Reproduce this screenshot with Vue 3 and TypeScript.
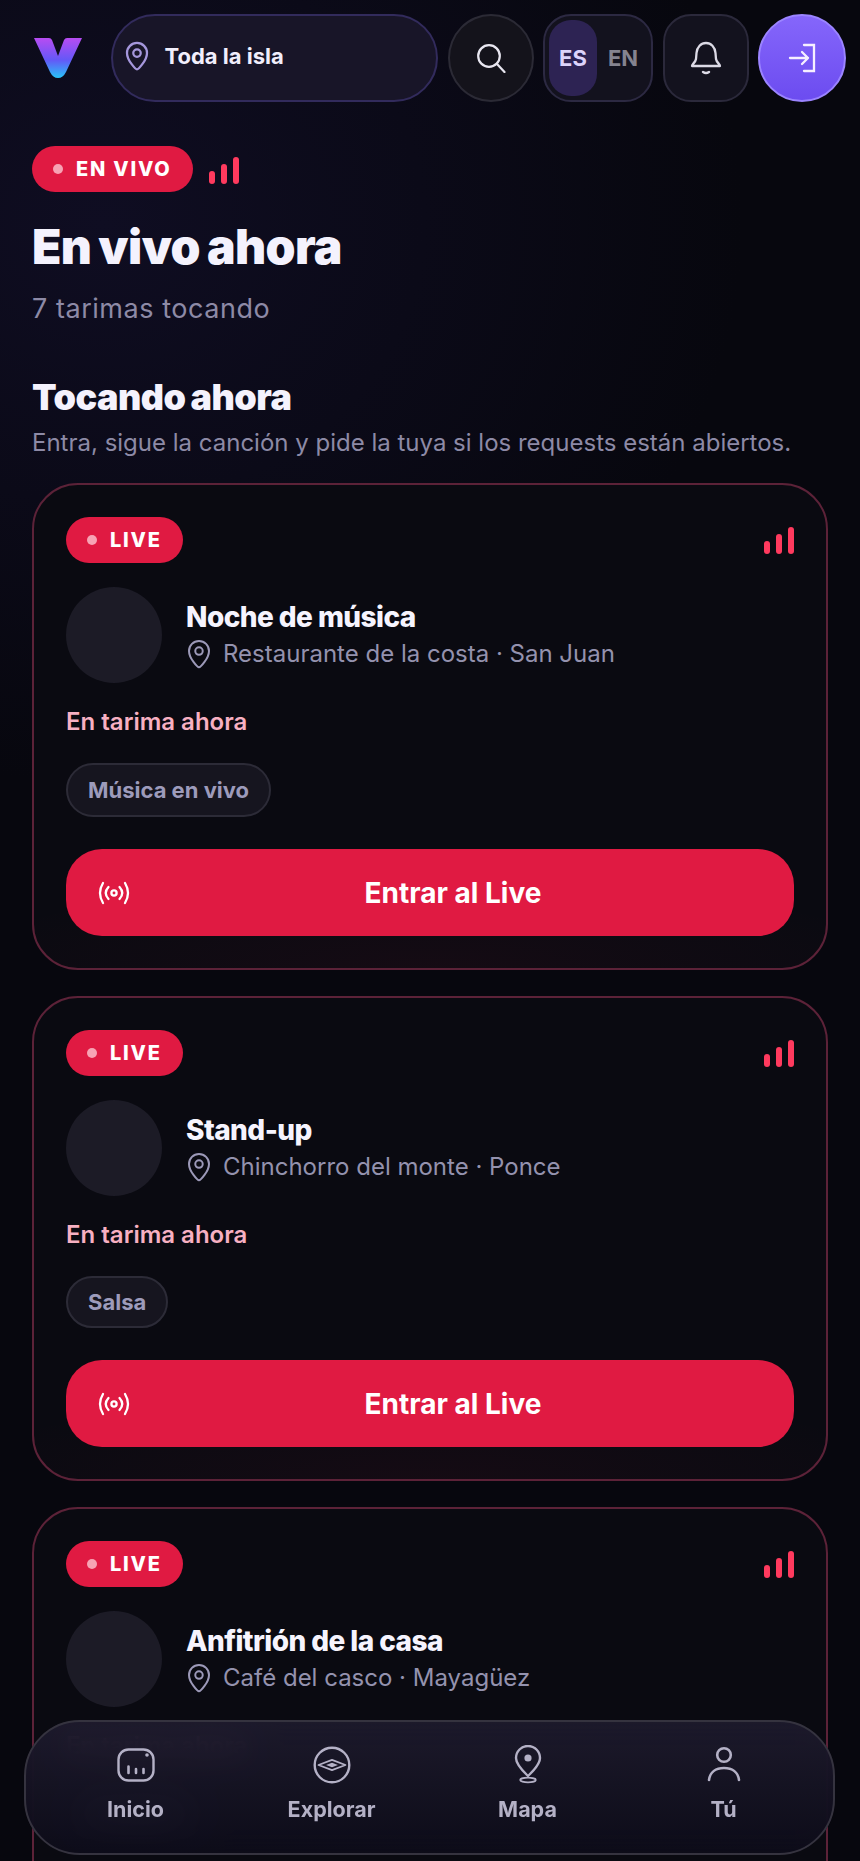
<script setup lang="ts">
interface Stage {
  id: number
  title: string
  place: string
  tag: string
  tallChip?: boolean
}

const stages: Stage[] = [
  { id: 1, title: 'Noche de música', place: 'Restaurante de la costa · San Juan', tag: 'Música en vivo', tallChip: true },
  { id: 2, title: 'Stand-up', place: 'Chinchorro del monte · Ponce', tag: 'Salsa' },
  { id: 3, title: 'Anfitrión de la casa', place: 'Café del casco · Mayagüez', tag: 'Acústico' },
]
</script>

<template>
  <div class="page">
    <header class="top">
      <svg class="logo" viewBox="0 0 50 42" width="50" height="42">
        <defs>
          <linearGradient id="logoGrad" x1="0" y1="0" x2="0" y2="1">
            <stop offset="0" stop-color="#b84cf2" />
            <stop offset="0.55" stop-color="#6458f7" />
            <stop offset="1" stop-color="#27c4f8" />
          </linearGradient>
        </defs>
        <path d="M1 1 H16 Q18 1 19 3 L25 19 L31 3 Q32 1 34 1 H49 L33 35 Q30 41 25 41 Q20 41 17 35 Z" fill="url(#logoGrad)" />
      </svg>
      <div class="loc">
        <svg viewBox="0 0 24 24" width="32" height="32" fill="none" stroke="#a597dc" stroke-width="1.700" stroke-linejoin="round">
          <path d="M12 22c-1 0-7.500-6.700-7.500-12.300a7.500 7.500 0 0 1 15 0C19.500 15.300 13 22 12 22z" />
          <circle cx="12" cy="9.800" r="2.800" />
        </svg>
        <span>Toda la isla</span>
      </div>
      <button class="round">
        <svg viewBox="0 0 30 30" width="30" height="30" fill="none" stroke="#e8e6f0" stroke-width="2.200" stroke-linecap="round">
          <circle cx="13" cy="13" r="10.800" />
          <path d="M21 21 L28.500 29" />
        </svg>
      </button>
      <div class="lang">
        <span class="lang-on">ES</span>
        <span class="lang-off">EN</span>
      </div>
      <button class="bell">
        <svg viewBox="0 0 32 34" width="32" height="34" fill="none" stroke="#dcdae6" stroke-width="2.300" stroke-linecap="round" stroke-linejoin="round">
          <path d="M2 25 H30 C30 23 26.500 21.500 26 18 L25.500 12 C25 6 21 2 16 2 C11 2 7 6 6.500 12 L6 18 C5.500 21.500 2 23 2 25 Z" />
          <path d="M13 31 Q16 33 19 31" />
        </svg>
      </button>
      <button class="login">
        <svg viewBox="0 0 30 30" width="30" height="30" fill="none" stroke="#f6efff" stroke-width="2.300" stroke-linecap="round">
          <path d="M17 2 H27 V28 H17" />
          <path d="M3 15 H21 M15 9 L21 15 L15 21" stroke-linejoin="round" />
        </svg>
      </button>
    </header>

    <main class="content">
      <div class="hero-badges">
        <span class="badge"><i class="dot"></i>EN VIVO</span>
        <span class="bars"><i></i><i></i><i></i></span>
      </div>
      <h1>En vivo ahora</h1>
      <p class="count">7 tarimas tocando</p>

      <h2>Tocando ahora</h2>
      <p class="hint">Entra, sigue la canción y pide la tuya si los requests están abiertos.</p>

      <div class="cards">
        <article v-for="s in stages" :key="s.id" class="card">
          <div class="card-top">
            <span class="badge"><i class="dot"></i>LIVE</span>
            <span class="bars"><i></i><i></i><i></i></span>
          </div>
          <div class="who">
            <div class="avatar"></div>
            <div class="who-text">
              <div class="name">{{ s.title }}</div>
              <div class="place">
                <svg viewBox="0 0 24 24" width="32" height="32" fill="none" stroke="#9c99b8" stroke-width="1.500" stroke-linejoin="round">
                  <path d="M12 22c-1 0-7.500-6.700-7.500-12.300a7.500 7.500 0 0 1 15 0C19.500 15.300 13 22 12 22z" />
                  <circle cx="12" cy="9.800" r="2.800" />
                </svg>
                <span>{{ s.place }}</span>
              </div>
            </div>
          </div>
          <div class="onstage">En tarima ahora</div>
          <div class="chips">
            <span class="chip" :class="{ 'chip-tall': s.tallChip }">{{ s.tag }}</span>
          </div>
          <button class="enter">
            <svg viewBox="0 0 30 22" width="30" height="22" fill="none" stroke="#fff" stroke-width="2.300" stroke-linecap="round">
              <circle cx="15" cy="11" r="2.600" />
              <path d="M9.500 5 Q4 11 9.500 17 M20.500 5 Q26 11 20.500 17 M4 1 Q-2 11 4 21 M26 1 Q32 11 26 21" />
            </svg>
            <span>Entrar al Live</span>
          </button>
        </article>
      </div>
    </main>

    <nav class="tabs">
      <a class="tab">
        <svg viewBox="0 0 38 34" width="38" height="34" fill="none" stroke="#b4b1c6" stroke-width="2.400" stroke-linecap="round">
          <rect x="1.500" y="1.500" width="35" height="31" rx="10" />
          <path d="M11.500 18.500 V25 M19 21 V25 M26.500 21 V25" stroke-width="2.600" />
          <circle cx="30" cy="7" r="1.800" fill="#b4b1c6" stroke="none" />
        </svg>
        <span>Inicio</span>
      </a>
      <a class="tab">
        <svg viewBox="0 0 38 38" width="38" height="38" fill="none" stroke="#b4b1c6" stroke-width="2.400" stroke-linejoin="round">
          <circle cx="19" cy="19" r="17.300" />
          <path d="M5.500 19 L19 13.800 L32.500 19 L19 24.200 Z" stroke-width="1.800" />
          <path d="M13 19 L19 16.800 L25 19 L19 21.200 Z" fill="#b4b1c6" stroke="none" />
        </svg>
        <span>Explorar</span>
      </a>
      <a class="tab">
        <svg viewBox="0 0 28 40" width="28" height="40" fill="none" stroke="#b4b1c6" stroke-width="2.400">
          <path d="M14 31 C11 28 2 20 2 13 a12 12 0 0 1 24 0 C26 20 17 28 14 31 Z" />
          <circle cx="14" cy="13" r="3.600" fill="#b4b1c6" stroke="none" />
          <ellipse cx="14" cy="35" rx="7.800" ry="2.400" stroke-width="1.800" />
        </svg>
        <span>Mapa</span>
      </a>
      <a class="tab">
        <svg viewBox="0 0 34 38" width="34" height="38" fill="none" stroke="#b4b1c6" stroke-width="2.600" stroke-linecap="round">
          <circle cx="17" cy="9" r="6.800" />
          <path d="M2 34 C3 26 9 22 17 22 C25 22 31 26 32 34" />
        </svg>
        <span>Tú</span>
      </a>
    </nav>
  </div>
</template>

<style scoped>
.page {
  position: relative;
  height: 1861px;
  overflow: hidden;
  color: #f3f1fb;
  font-family: Inter, 'Liberation Sans', sans-serif;
  background:
    radial-gradient(800px 700px at 12% 12%, #0f0d22 0%, rgba(15, 13, 34, 0) 80%),
    #07070e;
}

button {
  padding: 0;
  font-family: inherit;
  cursor: pointer;
}

.top {
  display: flex;
  align-items: center;
  gap: 9.500px;
  padding: 14px 14px 0 33px;
}

.logo {
  flex: none;
  margin-right: 18px;
}

.loc {
  flex: 1;
  height: 88px;
  display: flex;
  align-items: center;
  gap: 12px;
  padding: 0 0 4px 8px;
  box-sizing: border-box;
  border: 2px solid #322b5c;
  border-radius: 44px;
  background: #181528;
  font-size: 22px;
  font-weight: 700;
  color: #f1eefc;
}

.round,
.bell,
.login {
  flex: none;
  height: 88px;
  display: flex;
  align-items: center;
  justify-content: center;
  box-sizing: border-box;
}

.round {
  width: 86px;
  border: 2px solid #2b2a35;
  border-radius: 50%;
  background: #14131b;
}

.lang {
  flex: none;
  width: 110px;
  height: 88px;
  display: flex;
  align-items: center;
  padding: 4px;
  box-sizing: border-box;
  border: 2px solid #2c2942;
  border-radius: 28px;
  background: #13121e;
  font-size: 22px;
  font-weight: 700;
}

.lang-on {
  width: 48px;
  height: 76px;
  display: flex;
  align-items: center;
  justify-content: center;
  border-radius: 22px;
  background: #2d2353;
  color: #dcd3fa;
}

.lang-off {
  flex: 1;
  padding-left: 2px;
  text-align: center;
  color: #85838f;
}

.bell {
  width: 86px;
  border: 2px solid #2b293b;
  border-radius: 28px;
  background: #13121e;
}

.login {
  width: 88px;
  border: 2px solid #9b84ff;
  border-radius: 50%;
  background: linear-gradient(180deg, #8566fb 0%, #6c4cf0 100%);
}

.content {
  padding: 44px 32px 0;
}

.hero-badges {
  display: flex;
  align-items: center;
  gap: 16px;
}

.hero-badges .bars {
  margin-top: 3px;
}

.badge {
  display: inline-flex;
  align-items: center;
  height: 46px;
  padding: 0 21px;
  gap: 13px;
  border-radius: 23px;
  background: #e01a42;
  color: #fff;
  font-size: 20px;
  font-weight: 800;
  letter-spacing: 0.09em;
}

.dot {
  width: 10px;
  height: 10px;
  border-radius: 50%;
  background: #f7a3b4;
}

.bars {
  display: inline-flex;
  align-items: flex-end;
  gap: 6px;
  height: 27px;
}

.bars i {
  width: 6px;
  border-radius: 3px;
  background: #ff3a5e;
}

.bars i:nth-child(1) { height: 13px; }
.bars i:nth-child(2) { height: 20px; }
.bars i:nth-child(3) { height: 27px; }

h1 {
  margin: 27px 0 0;
  font-size: 48px;
  line-height: 56px;
  font-weight: 900;
  letter-spacing: -0.013em;
  word-spacing: -0.04em;
  color: #f4f2fd;
}

.count {
  margin: 17px 0 0;
  font-size: 27px;
  line-height: 34px;
  letter-spacing: 0.02em;
  color: #8d8aa6;
}

h2 {
  margin: 51px 0 0;
  font-size: 36px;
  line-height: 40px;
  font-weight: 900;
  letter-spacing: -0.014em;
  word-spacing: -0.05em;
  color: #f4f2fd;
}

.hint {
  margin: 10px 0 0;
  font-size: 24px;
  line-height: 32px;
  color: #8d8aa6;
}

.cards {
  display: flex;
  flex-direction: column;
  gap: 26px;
  margin-top: 24px;
}

.card {
  padding: 32px;
  box-sizing: border-box;
  border: 2px solid #5c2238;
  border-radius: 46px;
  background:
    radial-gradient(500px 90px at 50% 100%, rgba(224, 26, 66, 0.05), rgba(224, 26, 66, 0)),
    #0a0a11;
}

.card-top {
  display: flex;
  align-items: center;
  justify-content: space-between;
}

.who {
  display: flex;
  align-items: center;
  gap: 24px;
  margin-top: 24px;
}

.avatar {
  flex: none;
  width: 96px;
  height: 96px;
  border-radius: 50%;
  background: #1c1b26;
}

.name {
  font-size: 28px;
  line-height: 36px;
  font-weight: 800;
  letter-spacing: -0.02em;
  color: #f6f4fe;
}

.place {
  display: flex;
  align-items: center;
  gap: 8px;
  margin-top: 2px;
  margin-left: -3px;
  font-size: 24px;
  line-height: 34px;
  color: #9492ae;
}

.onstage {
  margin-top: 24px;
  font-size: 24px;
  line-height: 30px;
  font-weight: 600;
  color: #f7b0c2;
}

.chips {
  display: flex;
  margin-top: 26px;
}

.chip {
  height: 52px;
  display: inline-flex;
  align-items: center;
  padding: 0 20px;
  box-sizing: border-box;
  border: 2px solid #2c2b37;
  border-radius: 27px;
  background: #16151f;
  font-size: 22px;
  font-weight: 700;
  color: #9d9bbb;
}

.chip-tall {
  height: 54px;
}

.enter {
  display: flex;
  align-items: center;
  gap: 16px;
  width: 100%;
  height: 87px;
  margin-top: 32px;
  padding: 0 33px;
  box-sizing: border-box;
  border: 0;
  border-radius: 36px;
  background: #e01a42;
  color: #fff;
  font-size: 28px;
  font-weight: 700;
}

.enter svg {
  flex: none;
  overflow: visible;
}

.enter span {
  flex: 1;
  text-align: center;
}

.tabs {
  position: absolute;
  left: 24px;
  right: 25px;
  top: 1720px;
  height: 135px;
  display: grid;
  grid-template-columns: repeat(4, 1fr);
  box-sizing: border-box;
  padding: 23px 11.500px 0;
  border: 2px solid #35333f;
  border-radius: 56px;
  background: linear-gradient(180deg, rgba(30, 27, 46, 0.9) 0%, rgba(13, 12, 26, 0.9) 100%);
  backdrop-filter: blur(16px);
}

.tab {
  display: flex;
  flex-direction: column;
  align-items: center;
  gap: 12px;
  color: #b4b1c6;
  font-size: 21.500px;
  line-height: 25px;
  font-weight: 700;
}

.tab svg {
  height: 40px;
}
</style>

<style>
html,
body {
  margin: 0;
  background: #07070e;
}
</style>
